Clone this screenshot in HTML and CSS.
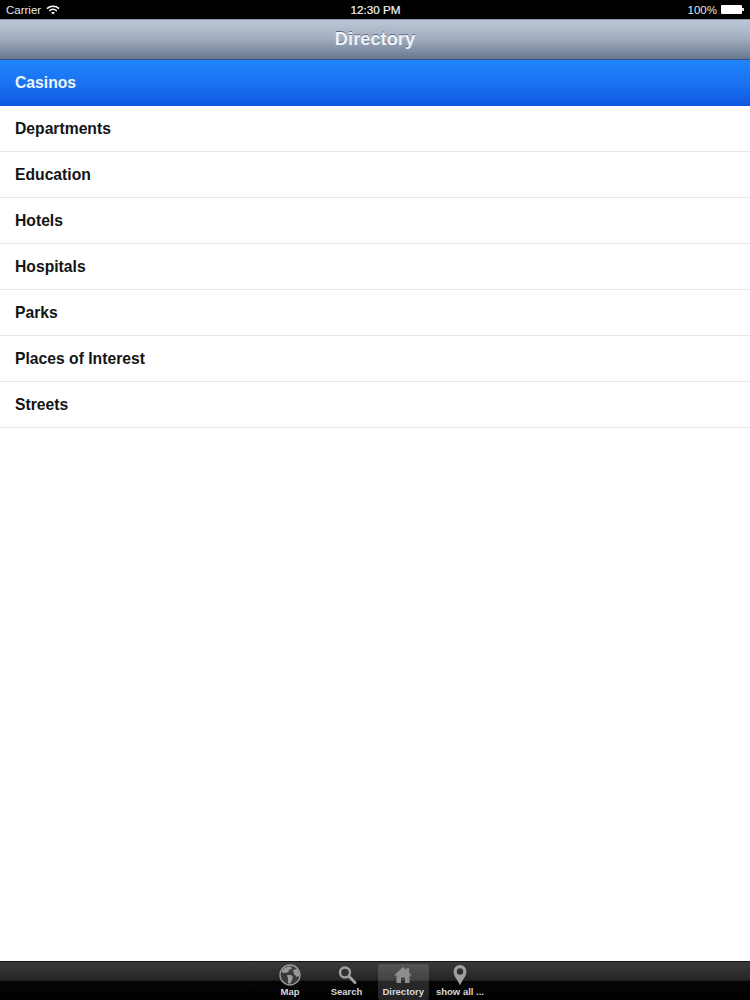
FILE: index.html
```html
<!DOCTYPE html>
<html lang="en">
<head>
<meta charset="utf-8">
<title>Directory</title>
<link rel="stylesheet" href="styles.css">
</head>
<body>
<div class="app">
  <div class="status">
    <div class="status-left">
      <span>Carrier</span>
      <svg class="wifi" width="14" height="10" viewBox="0 0 14 10"><path d="M1 3.600C4.400.6 9.600.6 13 3.600" fill="none" stroke="#fff" stroke-width="1.500"/><path d="M3.200 5.800C5.400 4 8.600 4 10.800 5.800" fill="none" stroke="#fff" stroke-width="1.500"/><path d="M7 9.500L5 7.600C6.200 6.700 7.800 6.700 9 7.600Z" fill="#fff"/></svg>
    </div>
    <div class="status-time">12:30 PM</div>
    <div class="status-right">
      <span>100%</span>
      <span class="battery"><span class="battery-cap"></span></span>
    </div>
  </div>
  <header class="navbar"><h1>Directory</h1></header>
  <ul class="list">
    <li class="row selected">Casinos</li>
    <li class="row">Departments</li>
    <li class="row">Education</li>
    <li class="row">Hotels</li>
    <li class="row">Hospitals</li>
    <li class="row">Parks</li>
    <li class="row">Places of Interest</li>
    <li class="row">Streets</li>
  </ul>
  <nav class="tabbar">
    <div class="tab">
      <svg width="24" height="22" viewBox="0 0 24 22"><circle cx="12" cy="11" r="10" fill="#3a3a3a" stroke="#9a9a9a" stroke-width="1.400"/><path d="M4 7C6 3.500 10 2 13 2.500L14 5L11 5.500L10.500 8L7 9L4 8.500ZM9 11L13 11L15 13L14 16L12 20L10 19L10 15ZM15 6L19 5L21 9L21 12L19 13L16 10Z" fill="#9a9a9a"/></svg>
      <span>Map</span>
    </div>
    <div class="tab">
      <svg width="24" height="22" viewBox="0 0 24 22"><circle cx="10" cy="8.500" r="5" fill="#333" stroke="#a0a0a0" stroke-width="2.400"/><path d="M14 12.500L20 18.500" stroke="#a0a0a0" stroke-width="3" stroke-linecap="round"/></svg>
      <span>Search</span>
    </div>
    <div class="tab active">
      <svg width="24" height="22" viewBox="0 0 24 22"><path d="M12 3L15.500 6.300L15.500 4L18 4L18 8.700L21 11.500L18.500 11.500L18.500 19L14 19L14 13.500L10 13.500L10 19L5.500 19L5.500 11.500L3 11.500Z" fill="#8d8d8d"/></svg>
      <span>Directory</span>
    </div>
    <div class="tab">
      <svg width="24" height="22" viewBox="0 0 24 22"><path fill-rule="evenodd" d="M12 21.500C10 16 5.500 12.500 5.500 7.500A6.500 6.500 0 0 1 18.500 7.500C18.500 12.500 14 16 12 21.500ZM12 4.300A3.200 3.200 0 1 0 12 10.700A3.200 3.200 0 1 0 12 4.300Z" fill="#a0a0a0"/></svg>
      <span>show all ...</span>
    </div>
  </nav>
</div>
</body>
</html>
```
FILE: styles.css
```css
* { box-sizing: border-box; }
html, body { margin: 0; padding: 0; }
body { font-family: "Liberation Sans", Arial, sans-serif; background: #fff; }
.app { width: 750px; height: 1000px; display: flex; flex-direction: column; overflow: hidden; }
.status {
  height: 19px; background: #000; color: #e6e6e6; font-size: 11.500px;
  display: grid; grid-template-columns: 1fr auto 1fr; align-items: center; padding: 0 5px 0 6px;
}
.status-left { display: flex; align-items: center; gap: 5px; }
.status-time { font-size: 11.700px; color: #f2f2f2; -webkit-text-stroke: 0.2px #f2f2f2; }
.status-right { display: flex; align-items: center; justify-content: flex-end; gap: 4px; }
.battery { display: block; position: relative; width: 21px; height: 9px; background: #fff; border-radius: 1px; margin-right: 3px; }
.battery-cap { position: absolute; right: -2px; top: 3px; width: 2px; height: 3px; background: #ddd; }
.navbar {
  height: 41px; padding-bottom: 2px; display: flex; align-items: center; justify-content: center;
  border-top: 1px solid #8d96a6; border-bottom: 1px solid #34527d;
  background: linear-gradient(#bcc6d6 0%, #a4afc1 45%, #7f8ca2 80%, #677690 100%);
}
.navbar h1 { margin: 0; font-size: 18.300px; font-weight: 700; color: #eef2f8; text-shadow: 0 -1px 0 #5f6b80; }
.list { list-style: none; margin: 0; padding: 0; flex: 1; }
.row {
  height: 46px; display: flex; align-items: center; padding-left: 15px;
  font-size: 15.700px; font-weight: 700; color: #141414; border-bottom: 1px solid #e8e8e8;
}
.row.selected { color: #eef5ff; border-bottom: 0; background: linear-gradient(#1f84fb 0%, #1a73f2 50%, #0f57e0 100%); }
.tabbar {
  height: 39px; display: flex; justify-content: center;
  border-top: 1px solid #111;
  background: linear-gradient(#3a3a3a 0%, #252525 48%, #060606 50%, #000 100%);
}
.tab {
  width: 56.500px; display: flex; flex-direction: column; align-items: center; justify-content: flex-start;
  color: #d8d8d8; font-size: 9.500px; font-weight: 700; padding-top: 2px; white-space: nowrap; border-radius: 2px;
}
.tab svg { display: block; flex: none; height: 22px; }
.tab span { display: block; line-height: 11px; margin-top: 0; }
.tab.active { background: rgba(255,255,255,0.14); width: 51px; margin: 2px 3px 0; padding-top: 0; }
```
